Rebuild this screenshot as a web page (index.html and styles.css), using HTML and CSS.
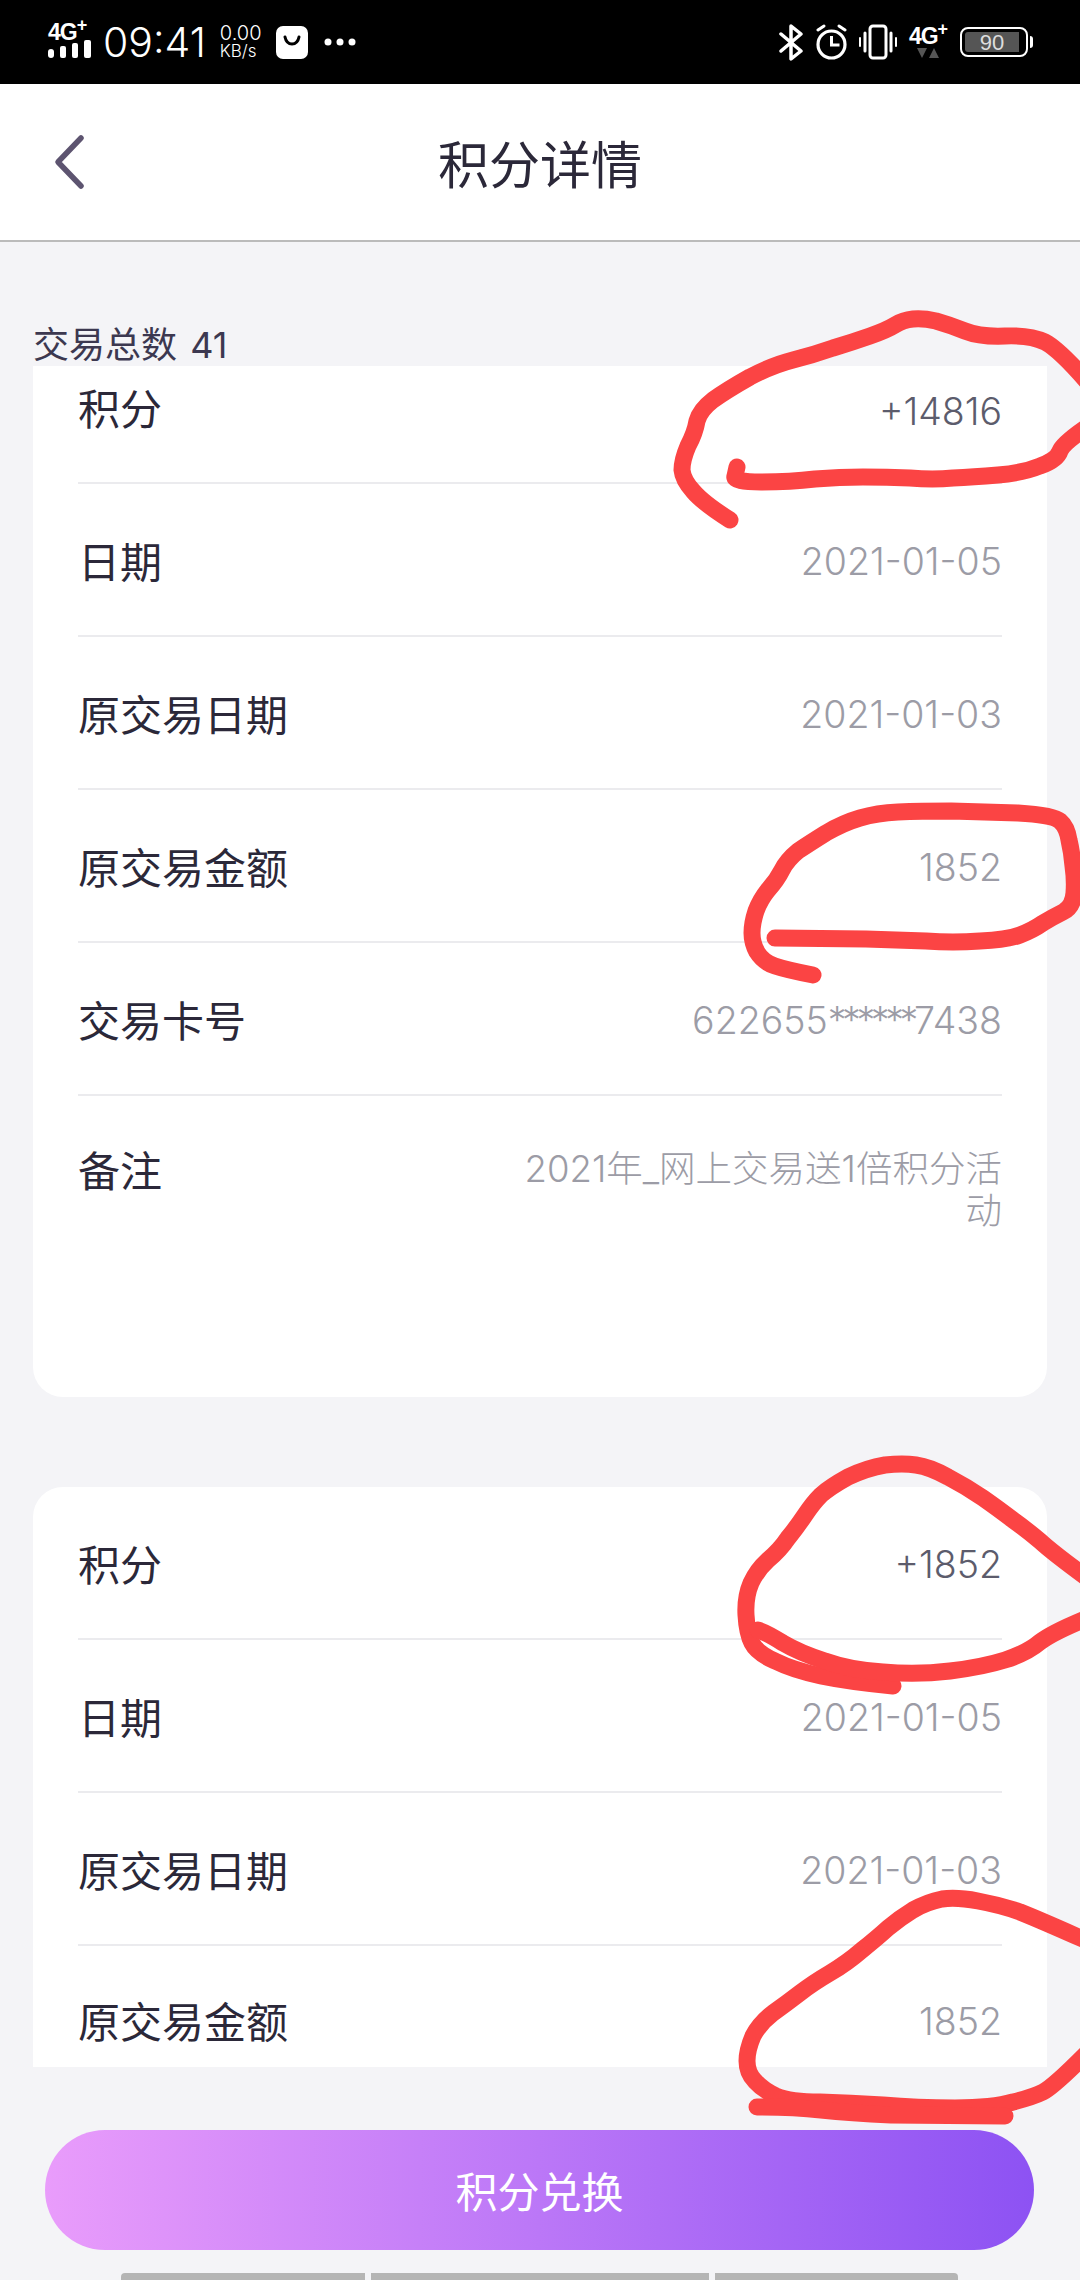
FILE: index.html
```html
<!DOCTYPE html>
<html lang="zh-CN">
<head>
  <meta charset="UTF-8">
  <title>积分详情</title>
  <link rel="stylesheet" href="styles.css">
</head>
<body>
  <div class="page">
    <!-- STATUS BAR -->
    <div class="status-bar">
      <div class="status-left">
        <div class="signal">
          <span class="signal-text">4G<sup>+</sup></span>
          <svg class="signal-bars" width="43" height="18" viewBox="0 0 43 18">
            <rect x="0" y="9" width="6" height="9" rx="3" fill="#fff"/>
            <rect x="12" y="6" width="6" height="12" rx="2" fill="#fff"/>
            <rect x="24" y="3" width="6" height="15" rx="2" fill="#fff"/>
            <rect x="36" y="0" width="7" height="18" rx="2" fill="#fff"/>
          </svg>
        </div>
        <span class="clock">09:41</span>
        <div class="speed"><span>0.00</span><span class="speed-unit">KB/s</span></div>
        <svg class="bag" width="32" height="33" viewBox="0 0 32 33">
          <rect width="32" height="33" rx="7" fill="#fff"/>
          <path d="M9 11c1 5 4 7 7 7s6-2 7-7" fill="none" stroke="#000" stroke-width="3" stroke-linecap="round"/>
        </svg>
        <svg class="dots" width="32" height="8" viewBox="0 0 32 8">
          <circle cx="4" cy="4" r="3.5" fill="#fff"/>
          <circle cx="16" cy="4" r="3.5" fill="#fff"/>
          <circle cx="28" cy="4" r="3.5" fill="#fff"/>
        </svg>
      </div>
      <div class="status-right">
        <svg width="25" height="37" viewBox="0 0 25 37">
          <path d="M2 10l20 17-10 8V2l10 8L2 27" fill="none" stroke="#fff" stroke-width="3.5" stroke-linejoin="round" stroke-linecap="round"/>
        </svg>
        <svg width="33" height="36" viewBox="0 0 33 36">
          <circle cx="16.500" cy="20.500" r="13.500" fill="none" stroke="#fff" stroke-width="3.200"/>
          <path d="M16.500 12v9h8" fill="none" stroke="#fff" stroke-width="3"/>
          <path d="M3 6l6-4M30 6l-6-4" fill="none" stroke="#fff" stroke-width="3" stroke-linecap="round"/>
        </svg>
        <svg width="38" height="36" viewBox="0 0 38 36">
          <rect x="11" y="2" width="16" height="32" rx="3" fill="none" stroke="#fff" stroke-width="3"/>
          <path d="M6 9v18M32 9v18" stroke="#fff" stroke-width="3" stroke-linecap="round"/>
          <path d="M1 14v8M37 14v8" stroke="#fff" stroke-width="2" stroke-linecap="round"/>
        </svg>
        <div class="net">
          <span class="net-text">4G<sup>+</sup></span>
          <svg width="22" height="10" viewBox="0 0 22 10">
            <path d="M0 0h10l-5 10zM12 10h10l-5-10z" fill="#555"/>
          </svg>
        </div>
        <div class="battery">
          <div class="battery-body"><span class="battery-fill">90</span></div>
          <span class="battery-tip"></span>
        </div>
      </div>
    </div>

    <!-- HEADER -->
    <div class="header">
      <svg class="back" width="32" height="56" viewBox="0 0 32 56">
        <path d="M28 4L5 28l23 24" fill="none" stroke="#5d5470" stroke-width="5.500" stroke-linecap="round" stroke-linejoin="round"/>
      </svg>
      <span class="title">积分详情</span>
    </div>

    <!-- CONTENT -->
    <div class="content">
      <div class="summary">交易总数 41</div>

      <div class="card card-first">
        <div class="row row-top"><span class="label">积分</span><span class="value value-dark">+14816</span></div>
        <div class="row"><span class="label">日期</span><span class="value">2021-01-05</span></div>
        <div class="row"><span class="label">原交易日期</span><span class="value">2021-01-03</span></div>
        <div class="row"><span class="label">原交易金额</span><span class="value">1852</span></div>
        <div class="row"><span class="label">交易卡号</span><span class="value">622655<span class="mask">******</span>7438</span></div>
        <div class="row row-note"><span class="label">备注</span><span class="value value-note">2021年_网上交易送1倍积分活动</span></div>
      </div>

      <div class="card card-second">
        <div class="row"><span class="label">积分</span><span class="value value-dark">+1852</span></div>
        <div class="row"><span class="label">日期</span><span class="value">2021-01-05</span></div>
        <div class="row"><span class="label">原交易日期</span><span class="value">2021-01-03</span></div>
        <div class="row row-cut"><span class="label">原交易金额</span><span class="value">1852</span></div>
      </div>
    </div>

    <!-- BUTTON -->
    <div class="footer">
      <div class="exchange">积分兑换</div>
      <div class="home-bars">
        <span class="home-bar home-bar-left"></span>
        <span class="home-bar home-bar-mid"></span>
        <span class="home-bar home-bar-right"></span>
      </div>
    </div>

    <!-- RED MARKS DRAWN ON THE SCREENSHOT -->
    <svg class="marks" width="1080" height="2280" viewBox="0 0 1080 2280">
      <g fill="none" stroke="#fb4444" stroke-width="17" stroke-linecap="round" stroke-linejoin="round">
        <path d="M730 520Q703 503 693 491Q683 480 682 470Q682 460 688 446Q695 433 697 421Q700 410 713 400Q727 390 750 377Q773 365 793 360Q813 355 833 348Q853 342 870 336Q887 330 895 325Q903 320 913 319Q923 318 936 321Q950 325 965 331Q980 337 1005 336Q1030 335 1045 342Q1060 350 1090 385"/>
        <path d="M1090 425Q1063 443 1060 451Q1057 460 1040 466Q1023 473 998 475Q973 477 953 478Q933 480 910 478Q887 477 863 477Q840 477 815 479Q790 482 761 482Q733 482 735 476L737 467"/>
        <path d="M813 975Q787 970 775 966Q763 962 757 952Q752 943 752 933Q752 923 756 911Q760 900 768 890Q777 880 782 870Q787 860 798 851Q810 843 826 833Q843 823 860 818Q877 813 898 812Q920 811 951 811Q983 812 1018 813Q1053 815 1060 821Q1067 827 1069 840Q1072 853 1073 866Q1075 880 1074 893Q1073 907 1063 912Q1053 917 1043 923Q1033 930 1020 935Q1007 940 980 941Q953 943 926 941Q900 940 866 939L775 938"/>
        <path d="M1090 1580Q1053 1553 1040 1541Q1027 1530 1013 1520Q1000 1510 983 1498Q967 1487 948 1477Q930 1467 916 1465Q903 1463 885 1465Q867 1468 848 1477Q830 1487 821 1495Q813 1503 805 1515Q797 1527 788 1538Q780 1550 768 1560Q757 1570 751 1583Q745 1597 746 1615Q747 1633 752 1643Q757 1653 775 1661Q793 1670 821 1676Q850 1682 893 1686"/>
        <path d="M1090 1617Q1053 1632 1040 1642Q1027 1653 1005 1660Q983 1667 950 1671Q917 1675 883 1672Q850 1670 825 1661Q800 1653 783 1643Q767 1633 758 1630"/>
        <path d="M1085 1940Q1040 1920 1020 1912Q1000 1905 978 1901Q957 1897 942 1899Q927 1902 913 1910Q900 1918 888 1928Q877 1938 862 1950Q847 1963 830 1973Q813 1983 800 1993Q787 2003 773 2013Q760 2023 753 2036Q747 2050 747 2061Q747 2073 755 2081Q763 2090 776 2096Q790 2102 820 2102Q850 2103 883 2105Q917 2108 955 2108Q993 2108 1013 2102Q1033 2097 1043 2092Q1053 2087 1085 2055"/>
        <path d="M757 2107Q793 2107 821 2110Q850 2113 891 2115L1005 2116"/>
      </g>
    </svg>
  </div>
</body>
</html>
```

FILE: styles.css
```css
* {
  box-sizing: border-box;
}

body {
  margin: 0;
  font-family: Inter, "Noto Sans CJK SC", sans-serif;
  background-color: #f4f4f7;
}

.page {
  position: relative;
  display: flex;
  flex-direction: column;
  width: 1080px;
  height: 2280px;
  overflow: hidden;
}

/* status bar */
.status-bar {
  display: flex;
  align-items: center;
  justify-content: space-between;
  height: 84px;
  padding: 0 47px 0 48px;
  background-color: #000;
  color: #fff;
}

.status-left,
.status-right {
  display: flex;
  align-items: center;
}

.signal {
  display: flex;
  flex-direction: column;
  width: 43px;
  margin-top: -4px;
}

.signal-text,
.net-text {
  font-family: "Liberation Sans", sans-serif;
  font-size: 23px;
  font-weight: 700;
  line-height: 18px;
  letter-spacing: -1px;
}

.signal-text sup,
.net-text sup {
  font-size: 18px;
  line-height: 0;
}

.signal-bars {
  display: block;
  margin-top: -1px;
}

.clock {
  margin-left: 12px;
  font-size: 41px;
  font-weight: 300;
  line-height: 44px;
}

.speed {
  display: flex;
  flex-direction: column;
  margin-left: 14px;
  font-size: 20px;
  line-height: 18px;
  font-weight: 300;
}

.speed-unit {
  font-size: 17px;
}

.bag {
  margin-left: 14px;
}

.dots {
  margin-left: 16px;
}

.status-right svg {
  display: block;
}

.status-right > svg {
  margin-right: 11px;
}

.net {
  display: flex;
  flex-direction: column;
  align-items: center;
  width: 40px;
  margin-right: 12px;
}

.net svg {
  margin-top: 3px;
}

.battery {
  display: flex;
  align-items: center;
}

.battery-body {
  width: 68px;
  height: 30px;
  padding: 3px;
  border: 2px solid #fff;
  border-radius: 8px;
}

.battery-fill {
  display: block;
  width: 54px;
  height: 20px;
  background-color: #555;
  border-radius: 3px 0 0 3px;
  color: #ddd;
  font-family: "Liberation Sans", sans-serif;
  font-size: 22px;
  line-height: 21px;
  text-align: center;
}

.battery-tip {
  width: 3px;
  height: 12px;
  margin-left: 2px;
  background-color: #fff;
  border-radius: 0 3px 3px 0;
}

/* header */
.header {
  position: relative;
  display: flex;
  align-items: center;
  justify-content: center;
  height: 158px;
  background-color: #fff;
  border-bottom: 2px solid #bbb;
}

.back {
  position: absolute;
  left: 53px;
  top: 50px;
}

.title {
  font-family: "Noto Sans CJK SC", sans-serif;
  font-size: 51px;
  font-weight: 400;
  color: #2b2839;
}

/* cards */
.content {
  flex: 1;
  padding: 0 33px;
}

.summary {
  height: 124px;
  padding-top: 80px;
  font-size: 36px;
  font-weight: 400;
  line-height: 46px;
  word-spacing: 3px;
  color: #3c3850;
}

.card {
  background-color: #fff;
  padding: 0 45px;
}

.card-first {
  height: 1031px;
  border-radius: 0 0 30px 30px;
}

.card-second {
  height: 580px;
  margin-top: 90px;
  border-radius: 30px 30px 0 0;
}

.row {
  display: flex;
  align-items: center;
  justify-content: space-between;
  height: 153px;
  border-bottom: 2px solid #ebebee;
}

.row-top {
  align-items: flex-start;
  height: 118px;
  padding-top: 13px;
}

.row-note {
  align-items: flex-start;
  height: auto;
  padding-top: 45px;
  border-bottom: none;
}

.row-cut {
  height: 124px;
  padding-top: 23px;
  border-bottom: none;
}

.label {
  flex-shrink: 0;
  font-family: "Noto Sans CJK SC", sans-serif;
  font-size: 42px;
  font-weight: 400;
  line-height: 56px;
  color: #2b2839;
}

.value {
  padding-top: 5px;
  font-size: 37.500px;
  font-weight: 300;
  line-height: 56px;
  color: #9c9ca6;
  text-align: right;
}

.value-dark {
  color: #5c5c6c;
}

.value-note {
  width: 482px;
  padding-top: 7px;
  font-size: 36.500px;
  line-height: 42px;
}

.mask {
  letter-spacing: -4.400px;
}

/* bottom */
.footer {
  height: 211px;
  padding: 61px 46px 0 45px;
}

.exchange {
  height: 120px;
  border-radius: 60px;
  background: linear-gradient(90deg, #e99cfb, #8d52f3);
  color: #fff;
  font-family: "Noto Sans CJK SC", sans-serif;
  font-size: 42px;
  font-weight: 400;
  line-height: 120px;
  text-align: center;
}

.home-bars {
  display: flex;
  gap: 6px;
  margin: 23px 76px 0;
}

.home-bar {
  height: 7px;
  background-color: #b5b5b5;
  border-radius: 4px 0 0 0;
}

.home-bar-left {
  width: 244px;
}

.home-bar-mid {
  width: 338px;
  border-radius: 0;
}

.home-bar-right {
  width: 243px;
  border-radius: 0 4px 0 0;
}

/* red pen marks lie over everything */
.marks {
  position: absolute;
  left: 0;
  top: 0;
}
```
